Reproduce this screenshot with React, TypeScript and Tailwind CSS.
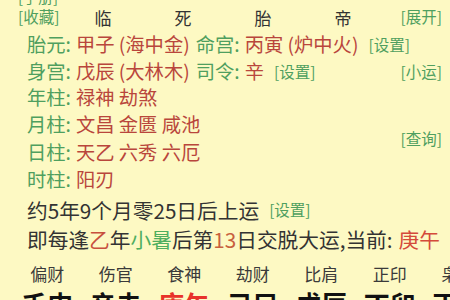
import React from "react";

const G = "text-[#4f9f5f]";
const R = "text-[#b9463c]";

function Set({ t = "[设置]" }: { t?: string }) {
  return <span className={`${G} text-[15.5px] ml-[10px]`}>{t}</span>;
}

export default function App() {
  const font = { fontFamily: '"Noto Sans CJK SC", "Noto Sans", sans-serif' };
  const top = ["临", "死", "胎", "帝"];
  const gods = ["偏财", "伤官", "食神", "劫财", "比肩", "正印", "枭神"];
  const pillars = ["壬申", "辛未", "庚午", "己巳", "戊辰", "丁卯", "丙寅"];
  return (
    <div className="w-[450px] h-[300px] overflow-hidden bg-[#fdf9c3] text-[#333]" style={font}>
      <div className={`h-[14px] mt-[-11px] pl-[18px] flex items-center text-[15px] ${G} leading-none`}>[手册]</div>
      <div className="h-[28px] flex items-center leading-none">
        <span className={`${G} text-[15.5px] pl-[18px] w-[63px]`}>[收藏]</span>
        {top.map((c) => (
          <span key={c} className="w-[80px] text-center text-[17px]">{c}</span>
        ))}
        <span className={`${G} text-[15.5px] ml-auto pr-[8px]`}>[展开]</span>
      </div>
      <div className="pl-[27px] text-[19.3px] leading-none">
        <div className="h-[26px] mt-[1px] flex items-center whitespace-nowrap">
          <span className={G}>胎元:</span>
          <span className={`${R} ml-[5px]`}>甲子 (海中金)</span>
          <span className={`${G} ml-[6px]`}>命宫:</span>
          <span className={`${R} ml-[5px]`}>丙寅 (炉中火)</span>
          <Set />
        </div>
        <div className="h-[27px] flex items-center whitespace-nowrap">
          <span className={G}>身宫:</span>
          <span className={`${R} ml-[5px]`}>戊辰 (大林木)</span>
          <span className={`${G} ml-[6px]`}>司令:</span>
          <span className={`${R} ml-[5px]`}>辛</span>
          <Set />
          <span className={`${G} text-[15.5px] ml-auto pr-[8px]`}>[小运]</span>
        </div>
        <div className="flex items-center">
          <div className="flex flex-col">
            <div className="h-[26px] flex items-center">
              <span className={G}>年柱:</span>
              <span className={`${R} ml-[5px]`}>禄神 劫煞</span>
            </div>
            <div className="h-[28px] flex items-center">
              <span className={G}>月柱:</span>
              <span className={`${R} ml-[5px]`}>文昌 金匮 咸池</span>
            </div>
            <div className="h-[28px] flex items-center">
              <span className={G}>日柱:</span>
              <span className={`${R} ml-[5px]`}>天乙 六秀 六厄</span>
            </div>
            <div className="h-[26px] flex items-center">
              <span className={G}>时柱:</span>
              <span className={`${R} ml-[5px]`}>阳刃</span>
            </div>
          </div>
          <span className={`${G} text-[15.5px] ml-auto pr-[8px]`}>[查询]</span>
        </div>
        <div className="h-[30px] mt-[2px] flex items-center text-[20.7px] text-[#333] whitespace-nowrap">
          <span>约5年9个月零25日后上运</span>
          <Set />
        </div>
        <div className="h-[28px] flex items-center text-[20.7px] text-[#333] whitespace-nowrap">
          <span>即每逢</span>
          <span className="text-[#c8503e]">乙</span>
          <span>年</span>
          <span className="text-[#4fae5f]">小暑</span>
          <span>后第</span>
          <span className="text-[#c8603e]">13</span>
          <span>日交脱大运,当前: </span>
          <span className="text-[#d44a3a] ml-[6px]">庚午</span>
        </div>
      </div>
      <div className="h-[34px] mt-[3px] pl-[13px] flex items-center text-[17px] text-[#3a3a3a] leading-none whitespace-nowrap">
        {gods.map((g) => (
          <span key={g} className="w-[68.5px] shrink-0 text-center">{g}</span>
        ))}
      </div>
      <div className="pl-[13px] mt-[1px] flex items-start text-[26px] font-bold text-[#111] leading-none whitespace-nowrap">
        {pillars.map((p) => (
          <span key={p} className={`w-[68.5px] shrink-0 text-center ${p === "庚午" ? "text-[#e8322a]" : ""}`}>{p}</span>
        ))}
      </div>
    </div>
  );
}
